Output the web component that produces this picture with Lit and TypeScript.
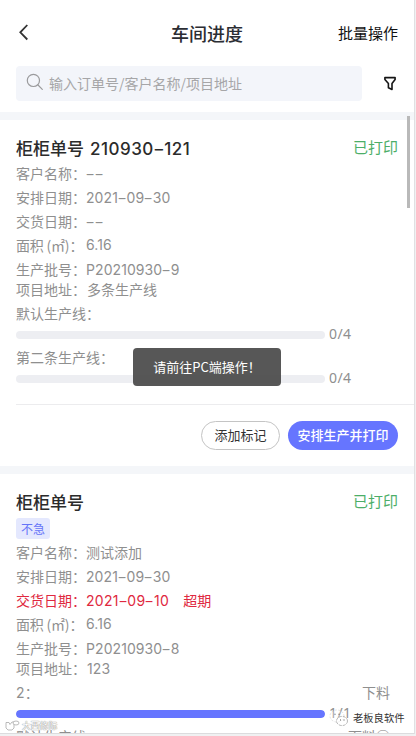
import { LitElement, html, css, svg, nothing } from "lit";
import { customElement, property } from "lit/decorators.js";

// Digits are set in Inter; hyphens are stretched to digit width.
const latin = (text: string) =>
  html`<span class="latin">${text.split(/(-)/).map((p) => (p === "-" ? html`<span class="dash">-</span>` : p))}</span>`;

const latinStyles = css`
  .latin { font-family: Inter, "Noto Sans CJK SC", sans-serif; font-size: 14px; letter-spacing: 0.08px; white-space: pre; }
  .dash { display: inline-block; width: 0.61em; text-align: center; transform: scaleX(1.5); }
`;

interface Line { name: string; done: number; total: number; step?: string }
interface Order {
  no: string; urgent?: string; customer: string; start: string; due: string; late?: boolean;
  area: string; batch: string; address: string; lines: Line[]; footer: boolean;
}

const ORDERS: Order[] = [
  {
    no: "210930-121", customer: "--", start: "2021-09-30", due: "--", area: "6.16",
    batch: "P20210930-9", address: "多条生产线", footer: true,
    lines: [{ name: "默认生产线", done: 0, total: 4 }, { name: "第二条生产线", done: 0, total: 4 }],
  },
  {
    no: "", urgent: "不急", customer: "测试添加", start: "2021-09-30", due: "2021-09-10", late: true, area: "6.16",
    batch: "P20210930-8", address: "123", footer: false,
    lines: [{ name: "2", done: 1, total: 1, step: "下料" }, { name: "默认生产线", done: 0, total: 1, step: "下料①" }],
  },
];

@customElement("order-card")
export class OrderCard extends LitElement {
  @property({ attribute: false }) order!: Order;

  static styles = [latinStyles, css`
    :host { display: block; background: #fff; padding: 16px 0 0 16px; border-top: 8px solid #f4f6f9; color: #8f8f8f; font-size: 14px; }
    .head { display: flex; justify-content: space-between; height: 24px; line-height: 23px; padding-right: 16px; margin-bottom: 2px; }
    .title { font-size: 17px; font-weight: 500; color: #2b2b2b; white-space: pre; }
    .title .latin { font-size: 17px; font-weight: 500; letter-spacing: 0.5px; margin-left: 6px; }
    .state { color: #4cae68; font-size: 15px; line-height: 22px; }
    .tag { display: block; width: 34px; height: 21px; line-height: 21px; margin: 4px 0 2px; text-align: center; border-radius: 3px; background: #e4e8fe; color: #6474f8; font-size: 12px; }
    .row { display: flex; height: 24px; line-height: 22px; white-space: pre; }
    .row.late { color: #e02840; }
    .late .latin { letter-spacing: 0.3px; }
    .row .over { margin-left: 14px; }
    .row.address { height: 16px; line-height: 14px; margin-bottom: 4px; }
    .address .value { margin-left: 1px; }
    .unit { letter-spacing: -0.2px; width: 70px; }
    .line-head { justify-content: space-between; padding-right: 24px; }
    .progress { display: flex; align-items: center; height: 8px; margin: 5px 0 7px; gap: 4px; }
    .track { width: 309px; height: 8px; border-radius: 4px; background: #edeef2; overflow: hidden; }
    .fill { height: 100%; border-radius: 4px; background: #6675ff; }
    .count { font-size: 14px; line-height: 14px; padding-bottom: 2px; letter-spacing: 0.4px; font-family: "Noto Sans", sans-serif; }
    .foot { display: flex; justify-content: flex-end; align-items: center; gap: 8px; height: 61px; margin-top: 21px; padding-right: 16px; border-top: 1px solid #ececee; }
    .btn { box-sizing: border-box; height: 29px; border-radius: 15px; font: inherit; font-size: 13px; line-height: 25px; padding: 0 0 2px; }
    .mark { width: 79px; border: 1px solid #c4c4c4; background: #fff; color: #333; }
    .print { width: 110px; border: 0; background: #6675ff; color: #fff; font-weight: 500; }
  `];

  private row(label: string, value: string, extra: unknown = nothing, cls = "") {
    return html`<div class="row ${cls}"><span>${label}：</span><span class="value">${/[\d-]/.test(value) ? latin(value) : value}</span>${extra}</div>`;
  }

  render() {
    const o = this.order;
    return html`
      <div class="head">
        <span class="title">柜柜单号${o.no ? latin(o.no) : nothing}</span>
        <span class="state">已打印</span>
      </div>
      ${o.urgent ? html`<span class="tag">${o.urgent}</span>` : nothing}
      ${this.row("客户名称", o.customer)}
      ${this.row("安排日期", o.start)}
      ${this.row("交货日期", o.due, o.late ? html`<span class="over">超期</span>` : nothing, o.late ? "late" : "")}
      <div class="row"><span class="unit">面积 (㎡)：</span>${latin(o.area)}</div>
      ${this.row("生产批号", o.batch)}
      ${this.row("项目地址", o.address, nothing, "address")}
      ${o.lines.map((l) => html`
        <div class="row line-head"><span>${/\d/.test(l.name) ? latin(l.name) : l.name}：</span><span>${l.step ?? nothing}</span></div>
        <div class="progress">
          <div class="track"><div class="fill" style="width:${(l.done / l.total) * 100}%"></div></div>
          <span class="count">${l.done}/${l.total}</span>
        </div>`)}
      ${o.footer ? html`<div class="foot"><button class="btn mark">添加标记</button><button class="btn print">安排生产并打印</button></div>` : nothing}
    `;
  }
}

@customElement("app-root")
export class AppRoot extends LitElement {
  static styles = css`
    :host { display: block; position: relative; width: 416px; height: 736px; overflow: hidden; background: #f0f1f2; font-family: "Noto Sans CJK SC", sans-serif; }
    .screen { display: flex; flex-direction: column; box-sizing: border-box; width: 415px; height: 734px; background: #fff; border-right: 1px solid #e0e0e2; border-bottom: 1px solid #dcdcde; overflow: hidden; }
    .nav { display: grid; grid-template-columns: 1fr auto 1fr; align-items: center; flex: none; height: 66px; box-sizing: border-box; padding: 0 16px; }
    .back { display: block; margin: -3px 0 0 2px; }
    .name { font-size: 18px; font-weight: 500; color: #2b2d33; line-height: 24px; }
    .batch { justify-self: end; font-size: 15px; color: #111; line-height: 24px; }
    .search { display: flex; align-items: center; flex: none; height: 35px; padding: 0 16px 11px; }
    .field { display: flex; align-items: center; gap: 5px; box-sizing: border-box; width: 346px; height: 35px; padding: 0 0 2px 10px; background: #f3f5fa; border-radius: 4px; color: #a6a6a8; font-size: 14px; white-space: nowrap; }
    .glass { margin-top: -2px; flex: none; }
    .funnel { margin-left: 21px; }
    .list { flex: 1; min-height: 0; overflow: hidden; }
    .list order-card { display: block; }
    .thumb { position: absolute; left: 407px; top: 116px; width: 3px; height: 92px; background: #b9b9b9; }
    .toast { position: absolute; left: 133px; top: 348px; width: 148px; height: 38px; line-height: 38px; text-align: center; border-radius: 4px; background: rgba(70, 70, 70, 0.91); color: #fff; font-size: 13px; }
    .brand { position: absolute; left: 329px; top: 707px; display: flex; align-items: center; gap: 4px; font-size: 10.3px; line-height: 22px; color: #333; text-shadow: 0 0 1px #fff, 1px 1px 0 #fff; white-space: nowrap; }
    .corner { position: absolute; left: 5px; top: 719px; display: flex; align-items: center; gap: 2px; font-size: 8.8px; line-height: 14px; color: #fff; text-shadow: 0 0 1px #888, 0 0 1px #888; }
  `;

  render() {
    return html`
      <div class="screen">
        <header class="nav">
          <svg class="back" width="12" height="18" viewBox="0 0 12 18" fill="none" stroke="#333" stroke-width="1.8"><path d="M9.3 2 2.3 9.3l7 7.2" /></svg>
          <span class="name">车间进度</span>
          <span class="batch">批量操作</span>
        </header>
        <div class="search">
          <div class="field">
            <svg class="glass" width="18" height="18" viewBox="0 0 18 18" fill="none" stroke="#9b9b9d" stroke-width="1.2" stroke-linecap="round"><circle cx="7.4" cy="7.4" r="6.1" /><path d="m12 12 4.3 4.3" /></svg>
            <span>输入订单号/客户名称/项目地址</span>
          </div>
          <svg class="funnel" width="14" height="15" viewBox="0 0 14 15" fill="none" stroke="#151515" stroke-width="1.6" stroke-linejoin="round"><path d="M1.9 1.6h10.2v1.9L9 7.5v6L5.4 11.7V7.5L1.9 3.5z" /></svg>
        </div>
        <main class="list">${ORDERS.map((o) => html`<order-card .order=${o}></order-card>`)}</main>
      </div>
      <div class="thumb"></div>
      <div class="toast">请前往PC端操作！</div>
      <div class="brand">
        <svg width="20" height="18" viewBox="0 0 20 18">${svg`<ellipse cx="8" cy="7" rx="7" ry="6" fill="#fff" fill-opacity=".25" stroke="#ccc" stroke-width=".6" stroke-dasharray="2 1.5"/><ellipse cx="13" cy="12" rx="5.5" ry="4.6" fill="#fff" fill-opacity=".6" stroke="#999" stroke-width=".7" stroke-dasharray="3 1"/><path d="M5.5 5.2h1M9.5 5.2h1M11 11h1M14.5 11h1" stroke="#555" stroke-width="1.1"/>`}</svg>
        <span>老板良软件</span>
      </div>
      <div class="corner">
        <svg width="15" height="12" viewBox="0 0 15 12" fill="#fff" stroke="#aaa" stroke-width=".8"><path d="M1 2.5h3l1 2 2-2.5h2v6l-2 2H3L1 8z" /><ellipse cx="11" cy="3" rx="3" ry="2" /></svg>
        <span>大西修际</span>
      </div>
    `;
  }
}
